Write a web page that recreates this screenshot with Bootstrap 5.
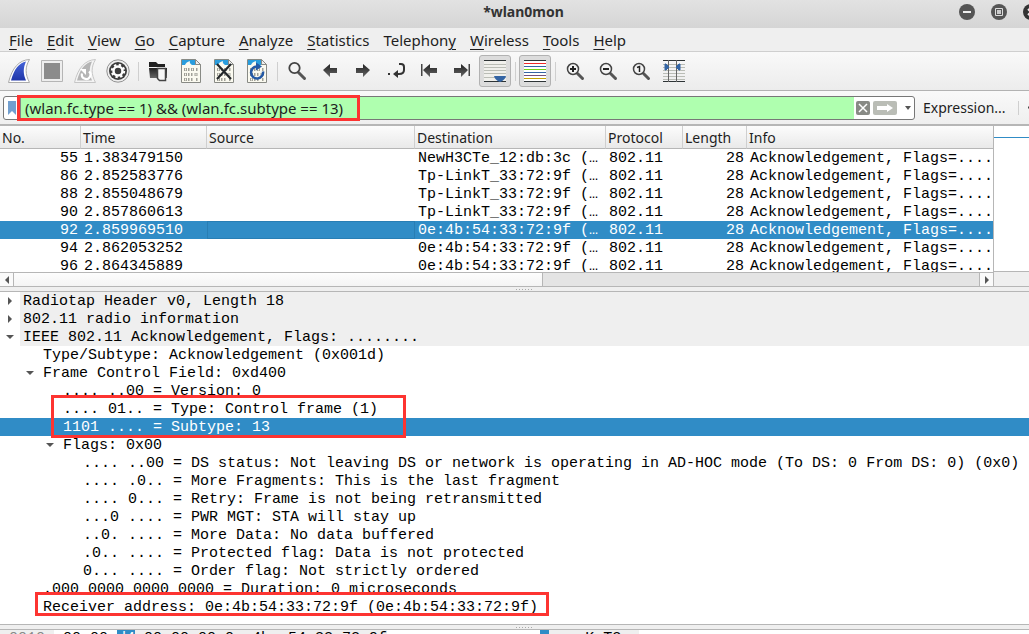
<!DOCTYPE html>
<html lang="en">
<head>
<meta charset="utf-8">
<meta name="viewport" content="width=device-width, initial-scale=1">
<title>*wlan0mon</title>
<link href="https://cdn.jsdelivr.net/npm/bootstrap@5.3.0/dist/css/bootstrap.min.css" rel="stylesheet">
<script src="https://cdn.jsdelivr.net/npm/bootstrap@5.3.0/dist/js/bootstrap.bundle.min.js" defer></script>
<style>
  :root { --ui: "Noto Sans", "Open Sans", sans-serif; --fixed: "Liberation Mono", monospace; --sel: #308cc6; --line: #b6b6b6; --alert: #fd3431; }
  body { font-family: var(--ui); font-size: 14px; line-height: 20px; color: #1e1e1e; background: #efefef; }
  button { font: inherit; color: inherit; background: none; border: 0; padding: 0; }
  .title-bar { height: 28px; background: linear-gradient(#e2e2e2, #d5d5d5); padding-left: 18px; }
  .title-bar h1 { font-size: 14px; line-height: 24px; font-weight: 700; color: #333; }
  .window-buttons { right: -10px; top: 4px; gap: 16px; }
  .window-buttons svg { display: block; }
  .menu-bar { height: 24px; padding-left: 9px; gap: 14px; font-size: 15px; border-bottom: 1px solid #cfcfcf; }
  .menu-bar a { color: #1e1e1e; text-decoration: none; }
  .menu-bar u { text-underline-offset: 3px; text-decoration-thickness: 1px; }
  .tool-bar { height: 39px; padding-left: 3px; background: linear-gradient(#f9f9f9, #ececec); border-bottom: 1px solid #b2b2b2; }
  .tool { width: 32px; height: 32px; margin-right: 1px; display: grid; place-items: center; border-radius: 3px; flex: none; }
  .tool svg { display: block; width: 24px; height: 24px; }
  .tool.pressed { border: 1px solid #b2b2b2; background: #dcdcdc; }
  .tool-gap { width: 1px; height: 19px; margin: 0 3px; background: #cfcfcf; flex: none; }
  .filter-bar { height: 35px; padding-left: 3px; background: linear-gradient(#f9f9f9, #efefef); border-bottom: 2px solid var(--line); }
  .filter-box { width: 912px; height: 24px; border: 1px solid #777; border-radius: 3px; background: #fff; overflow: hidden; flex: none; }
  .filter-box input { border: 0; border-left: 1px solid #888; background: #afffaf; padding: 0 0 0 4px; min-width: 0; height: 22px; outline: 0; color: #1e1e1e; font-size: 15px; margin-right: 2px; }
  .filter-apply { margin-left: 3px; }
  .filter-recent { padding: 0 3px 0 8px; }
  .filter-gap { width: 1px; height: 14px; margin: 0 9px 0 12px; background: #cfcfcf; flex: none; }
  .ring { position: absolute; border: 3px solid var(--alert); pointer-events: none; }
  .ring-filter { left: 17px; top: 4px; width: 343px; height: 26px; }
  .ring-subtype { left: 51px; top: 103px; width: 355px; height: 43px; }
  .ring-receiver { left: 35px; top: 300px; width: 514px; height: 24px; }
  .packet-list { width: 994px; border-right: 1px solid var(--line); background: #fff; flex: none; }
  .packet-view { height: 146px; overflow: hidden; }
  .packets { width: 993px; table-layout: fixed; border-collapse: separate; border-spacing: 0; font: 15px/17px var(--fixed); color: #000; }
  .packets th { font: 14px/20px var(--ui); color: #1e1e1e; height: 23px; padding: 2px 2px 0; background: linear-gradient(#fcfcfc, #e9e9e9); border-right: 1px solid #cfcfcf; border-bottom: 1px solid var(--line); }
  .packets th:last-child { border-right: 0; }
  .packets td { height: 18px; padding: 1px 3px 0; white-space: nowrap; overflow: hidden; text-overflow: ellipsis; }
  .packets td:last-child { text-overflow: clip; padding-right: 0; }
  .packets .num { text-align: right; }
  .packets .chosen td { background: var(--sel); color: #fff; }
  .packets .chosen .current-cell { box-shadow: inset 0 0 0 1px #287eb4; }
  .scroll-row { height: 15px; border-top: 1px solid var(--line); border-bottom: 1px solid var(--line); background: #e4e4e4; }
  .scroll-row button { width: 13px; background: #fafafa; display: grid; place-items: center; }
  .scroll-thumb { width: 530px; border: solid var(--line); border-width: 0 1px; background: linear-gradient(#fdfdfd, #f4f4f4); }
  .scroll-space { border-right: 1px solid var(--line); }
  .side-pane { border-bottom: 1px solid var(--line); }
  .mini-map { height: 146px; background: #fff; border-bottom: 1px solid var(--line); }
  .mini-map hr { margin: 11px 0 0; border: 0; border-top: 1px solid var(--sel); opacity: 1; }
  .splitter { height: 4px; display: grid; place-items: center; padding-left: 20px; }
  .splitter i { width: 17px; height: 1px; background: repeating-linear-gradient(90deg, #a9a9a9 0 1px, transparent 1px 3px); }
  .tree-pane { border: solid var(--line); border-width: 1px 0; background: #fff; font: 15px/17px var(--fixed); color: #000; height: 334px; }
  .tree-pane ul { list-style: none; margin: 0; padding: 0; }
  .tree-row { height: 18px; white-space: pre; display: flex; }
  .tree-row button { width: 20px; display: grid; place-items: center; flex: none; }
  .tree-row span { flex: 1; padding: 1px 0 0 3px; }
  .d1 { padding-left: 20px; } .d2 { padding-left: 40px; } .d3 { padding-left: 60px; } .d4 { padding-left: 80px; }
  .protocol span { background: #efefef; }
  .tree-row.chosen { background: var(--sel); color: #fff; }
  .hex-pane { height: 22px; background: #fff; border-top: 1px solid var(--line); font: 15px/18px var(--fixed); color: #000; white-space: pre; }
  .hex-address { width: 54px; padding-left: 9px; color: #888; background: #efefef; }
  .hex-bytes { background: #efefef; }
  .hex-on { background: var(--sel); color: #fff; }
</style>
</head>
<body>
<div class="vh-100 overflow-hidden">
  <header class="title-bar position-relative text-center">
    <h1 class="m-0">*wlan0mon</h1>
    <div class="window-buttons position-absolute d-flex">
      <button type="button" aria-label="Minimize"><svg width="16" height="16"><circle cx="8" cy="8" r="8" fill="#555"/><path d="M4 8h8" stroke="#eee" stroke-width="2"/></svg></button>
      <button type="button" aria-label="Maximize"><svg width="16" height="16"><circle cx="8" cy="8" r="8" fill="#555"/><path d="M4.500 4.500h7v7h-7z" fill="none" stroke="#ddd"/><path d="M6 6h4v4H6z" fill="#ccc"/></svg></button>
      <button type="button" aria-label="Close"><svg width="16" height="16"><circle cx="8" cy="8" r="8" fill="#333"/><path d="M5 5l6 6M11 5l-6 6" stroke="#eee" stroke-width="2"/></svg></button>
    </div>
  </header>

  <nav class="menu-bar d-flex align-items-center" aria-label="Menu">
    <a href="#"><u>F</u>ile</a><a href="#"><u>E</u>dit</a><a href="#"><u>V</u>iew</a><a href="#"><u>G</u>o</a><a href="#"><u>C</u>apture</a><a href="#"><u>A</u>nalyze</a><a href="#"><u>S</u>tatistics</a><a href="#">Telephon<u>y</u></a><a href="#"><u>W</u>ireless</a><a href="#"><u>T</u>ools</a><a href="#"><u>H</u>elp</a>
  </nav>

  <svg class="position-absolute" width="0" height="0" aria-hidden="true">
    <defs>
      <linearGradient id="finBlue" x2="0" y2="1"><stop stop-color="#4564d8"/><stop offset="1" stop-color="#1f35a8"/></linearGradient>
      <linearGradient id="arrowGray" x2="0" y2="1"><stop stop-color="#222"/><stop offset="1" stop-color="#666"/></linearGradient>
    </defs>
    <symbol id="file" viewBox="0 0 24 24">
      <path d="M2.500.5h14l5 5v18h-19z" fill="#fbfaf0" stroke="#888a85"/>
      <path d="M3 1h13v4h5v1H13q-3-2-2-4-4 1-5 4H3z" fill="#2a9ddd"/><path d="M16.500.5v5h5z" fill="#eee" stroke="#888a85"/>
      <path d="M5 10.500h3M9 10.500h1.500M12 10.500h3M17 10.500h1.500M5 15.500h3M9 15.500h1.500M12 15.500h1.500M15.500 15.500h3M5 20.500h3M9 20.500h1.500M12 20.500h1.500M17 20.500h1.500" stroke="#8a8a82" stroke-opacity=".8" stroke-width="3"/>
      <path d="M6.500 9.500v2M13.500 9.500v2M6.500 14.500v2M17 14.500v2M6.500 19.500v2" stroke="#fbfaf0"/>
    </symbol>
    <symbol id="lens" viewBox="0 0 24 24">
      <path d="M14.500 14.500l5 5" stroke="#555" stroke-width="3" stroke-linecap="round"/><circle cx="10" cy="10" r="5.500" fill="#f4f4f4" stroke="#444" stroke-width="1.500"/>
    </symbol>
    <symbol id="shut" viewBox="0 0 8 8"><path d="M2 0v8l4-4z" fill="#555"/></symbol>
    <symbol id="open" viewBox="0 0 8 8"><path d="M0 2h8L4 6z" fill="#555"/></symbol>
  </svg>

  <div class="tool-bar d-flex align-items-center" role="toolbar" aria-label="Main">
    <button class="tool" type="button" aria-label="Start capture"><svg viewBox="0 0 24 24"><path d="M1.500 23.500C5 9 12 1 22.500.5 18 8 18 15 22.500 23.500z" fill="#fff" stroke="#aaa"/><path d="M4 21.500C7 10 12 4 19 2.500 16 9 16 15 19 21.500z" fill="url(#finBlue)"/></svg></button>
    <button class="tool" type="button" aria-label="Stop capture"><svg viewBox="0 0 24 24"><path d="M1.500 1.500h21v21h-21z" fill="#eee" stroke="#b5b5b5"/><path d="M4 4h16v16H4z" fill="#8b8b8b"/></svg></button>
    <button class="tool" type="button" aria-label="Restart capture"><svg viewBox="0 0 24 24"><path d="M1.500 23.500C5 9 12 1 22.500.5 18 8 18 15 22.500 23.500z" fill="#f4f4f4" stroke="#c6c6c6"/><path d="M4 21.500C7 10 12 4 19 2.500 16 9 16 15 19 21.500z" fill="#b5b5b5"/><path d="M16 12.500a4.300 4.300 0 1 1-7 2" fill="none" stroke="#fff" stroke-width="2.200"/><path d="M7 10h6v6z" fill="#fff"/></svg></button>
    <button class="tool" type="button" aria-label="Capture options"><svg viewBox="0 0 24 24"><circle cx="12" cy="12" r="11.200" fill="#eee" stroke="#929292"/><circle cx="12" cy="12" r="9" fill="#3c3c3c"/><circle cx="12" cy="12" r="4.500" fill="none" stroke="#fff" stroke-width="2.500"/><circle cx="12" cy="12" r="6.200" fill="none" stroke="#fff" stroke-width="2" stroke-dasharray="2.400 2.470"/></svg></button>
    <span class="tool-gap"></span>
    <button class="tool" type="button" aria-label="Open"><svg viewBox="0 0 24 24"><path d="M3 3h7l2 2h7v3H3z" fill="#222"/><path d="M3 9h18v10H4z" fill="url(#arrowGray)"/><path d="M11.500 9.500h8v12h-6l-2-2z" fill="#f7f7f7" stroke="#444" stroke-width="1.500"/></svg></button>
    <button class="tool" type="button" aria-label="Save"><svg><use href="#file"/></svg></button>
    <button class="tool" type="button" aria-label="Close file"><svg viewBox="0 0 24 24"><use href="#file"/><path d="M5 5l14 15M19 5L5 20" stroke="#25292c" stroke-width="2.200"/></svg></button>
    <button class="tool" type="button" aria-label="Reload"><svg viewBox="0 0 24 24"><use href="#file"/><path d="M18 12.500A6 6 0 1 1 12 7.500" fill="none" stroke="#2459a5" stroke-width="2.500"/><path d="M11 3.500l6 4-6 4z" fill="#2459a5"/></svg></button>
    <span class="tool-gap"></span>
    <button class="tool" type="button" aria-label="Find"><svg viewBox="0 0 24 24"><path d="M13.500 13.500l6 6" stroke="#555" stroke-width="3" stroke-linecap="round"/><circle cx="9.500" cy="9" r="5.200" fill="#f4f4f4" stroke="#444" stroke-width="1.800"/></svg></button>
    <button class="tool" type="button" aria-label="Previous"><svg viewBox="0 0 24 24"><path d="M5 11l7-6v4h7v5h-7v4z" fill="url(#arrowGray)"/></svg></button>
    <button class="tool" type="button" aria-label="Next"><svg viewBox="0 0 24 24"><path d="M19 11l-7-6v4H5v5h7v4z" fill="url(#arrowGray)"/></svg></button>
    <button class="tool" type="button" aria-label="Go to packet"><svg viewBox="0 0 24 24"><path d="M15 5h2q3 0 3 3v3q0 4-5 4h-3" fill="none" stroke="#333" stroke-width="2"/><path d="M9 15l5-4v8z" fill="#333"/><path d="M4 14h2v2H4z" fill="#333"/></svg></button>
    <button class="tool" type="button" aria-label="First packet"><svg viewBox="0 0 24 24"><path d="M4 5h1.500v12H4z" fill="#444"/><path d="M6 11l7-6v4h7v5h-7v4z" fill="url(#arrowGray)"/></svg></button>
    <button class="tool" type="button" aria-label="Last packet"><svg viewBox="0 0 24 24"><path d="M18.500 5H20v12h-1.500z" fill="#444"/><path d="M18 11l-7-6v4H4v5h7v4z" fill="url(#arrowGray)"/></svg></button>
    <button class="tool pressed" type="button" aria-label="Auto scroll"><svg viewBox="0 0 24 24"><path d="M1 1h22v22H1z" fill="#f0f0ec"/><path d="M1 1.500h22M1 22.500h22" stroke="#2e3436"/><path d="M1 5.500h22M1 8.500h22M1 11.500h22M1 14.500h22M1 18.500h22" stroke="#babdb6"/><path d="M11 17h12q-1 4-6 6-5-2-6-6z" fill="#3465a4"/></svg></button>
    <span class="tool-gap"></span>
    <button class="tool pressed" type="button" aria-label="Colorize"><svg viewBox="0 0 24 24"><path d="M1 1h22v22H1z" fill="#fff"/><path d="M1 1.500h22M1 22.500h22" stroke="#2e3436"/><path d="M1 4.500h22" stroke="#ef2929"/><path d="M1 7.500h22M1 13.500h22" stroke="#3465a4"/><path d="M1 10.500h22" stroke="#73d216"/><path d="M1 16.500h22" stroke="#75507b"/><path d="M1 19.500h22" stroke="#c4a000"/></svg></button>
    <span class="tool-gap"></span>
    <button class="tool" type="button" aria-label="Zoom in"><svg viewBox="0 0 24 24"><use href="#lens"/><path d="M7 10h6M10 7v6" stroke="#222" stroke-width="2"/></svg></button>
    <button class="tool" type="button" aria-label="Zoom out"><svg viewBox="0 0 24 24"><use href="#lens"/><path d="M7 10h6" stroke="#222" stroke-width="2"/></svg></button>
    <button class="tool" type="button" aria-label="Normal size"><svg viewBox="0 0 24 24"><use href="#lens"/><path d="M8 8.500l2.500-1V13" fill="none" stroke="#222" stroke-width="1.500"/></svg></button>
    <button class="tool" type="button" aria-label="Resize columns"><svg viewBox="0 0 24 24"><path d="M1 1.500h22M1 22.500h22" stroke="#2e3436"/><path d="M1 5.500h22M1 8.500h22M1 11.500h22M1 14.500h22M1 17.500h22M1 20.500h22" stroke="#babdb6"/><path d="M6.500 1v22M14.500 1v22" stroke="#666"/><path d="M3 5h1l3 3-3 3H3zM18 5h-1l-3 3 3 3h1z" fill="#3465a4" stroke="#3465a4"/></svg></button>
  </div>

  <div class="filter-bar d-flex align-items-center position-relative">
    <div class="filter-box d-flex align-items-center">
      <button type="button" class="px-1" aria-label="Bookmarks"><svg class="d-block" width="8" height="14"><path d="M0 0h8v14l-4-4-4 4z" fill="#729fcf"/></svg></button>
      <input class="flex-fill" type="text" aria-label="Display filter" value="(wlan.fc.type == 1) &amp;&amp; (wlan.fc.subtype == 13)">
      <button type="button" aria-label="Clear"><svg class="d-block" width="14" height="14"><rect width="14" height="14" rx="2" fill="#888a85"/><path d="M3 3l8 8M11 3l-8 8" stroke="#fff" stroke-width="1.500"/></svg></button>
      <button type="button" class="filter-apply" aria-label="Apply"><svg class="d-block" width="24" height="14"><rect width="24" height="14" rx="2" fill="#babdb6"/><path d="M4 5h10V3l6 4-6 4V9H4z" fill="#fff"/></svg></button>
      <button type="button" class="filter-recent" aria-label="Recent filters"><svg class="d-block" width="6" height="4"><path d="M0 0h6L3 4z" fill="#555"/></svg></button>
    </div>
    <button type="button" class="ms-2 flex-shrink-0">Expression...</button>
    <span class="filter-gap"></span>
    <button type="button" class="flex-fill overflow-hidden" aria-label="Add filter button"><svg class="d-block" width="9" height="9"><path d="M0 4.500h9M4.500 0v9" stroke="#444" stroke-width="2"/></svg></button>
    <span class="ring ring-filter"></span>
  </div>

  <div class="d-flex">
    <div class="packet-list">
      <div class="packet-view">
        <table class="packets">
          <colgroup><col style="width:81px"><col style="width:126px"><col style="width:208px"><col style="width:191px"><col style="width:77px"><col style="width:64px"><col></colgroup>
          <thead><tr><th>No.</th><th>Time</th><th>Source</th><th>Destination</th><th>Protocol</th><th>Length</th><th>Info</th></tr></thead>
          <tbody>
            <tr><td class="num">55</td><td>1.383479150</td><td></td><td>NewH3CTe_12:db:3c (…</td><td>802.11</td><td class="num">28</td><td>Acknowledgement, Flags=....</td></tr>
            <tr><td class="num">86</td><td>2.852583776</td><td></td><td>Tp-LinkT_33:72:9f (…</td><td>802.11</td><td class="num">28</td><td>Acknowledgement, Flags=....</td></tr>
            <tr><td class="num">88</td><td>2.855048679</td><td></td><td>Tp-LinkT_33:72:9f (…</td><td>802.11</td><td class="num">28</td><td>Acknowledgement, Flags=....</td></tr>
            <tr><td class="num">90</td><td>2.857860613</td><td></td><td>Tp-LinkT_33:72:9f (…</td><td>802.11</td><td class="num">28</td><td>Acknowledgement, Flags=....</td></tr>
            <tr class="chosen"><td class="num">92</td><td>2.859969510</td><td class="current-cell"></td><td>0e:4b:54:33:72:9f (…</td><td>802.11</td><td class="num">28</td><td>Acknowledgement, Flags=....</td></tr>
            <tr><td class="num">94</td><td>2.862053252</td><td></td><td>0e:4b:54:33:72:9f (…</td><td>802.11</td><td class="num">28</td><td>Acknowledgement, Flags=....</td></tr>
            <tr><td class="num">96</td><td>2.864345889</td><td></td><td>0e:4b:54:33:72:9f (…</td><td>802.11</td><td class="num">28</td><td>Acknowledgement, Flags=....</td></tr>
          </tbody>
        </table>
      </div>
      <div class="scroll-row d-flex">
        <button type="button" aria-label="Scroll left"><svg width="4" height="8"><path d="M4 0v8L0 4z" fill="#555"/></svg></button>
        <div class="scroll-thumb"></div>
        <div class="scroll-space flex-fill"></div>
        <button type="button" aria-label="Scroll right"><svg width="4" height="8"><path d="M0 0v8l4-4z" fill="#555"/></svg></button>
      </div>
    </div>
    <div class="side-pane flex-fill"><div class="mini-map overflow-hidden"><hr></div></div>
  </div>
  <div class="splitter"><i></i></div>

  <div class="tree-pane position-relative">
    <ul>
      <li class="tree-row protocol"><button type="button" aria-label="Expand"><svg width="8" height="8"><use href="#shut"/></svg></button><span>Radiotap Header v0, Length 18</span></li>
      <li class="tree-row protocol"><button type="button" aria-label="Expand"><svg width="8" height="8"><use href="#shut"/></svg></button><span>802.11 radio information</span></li>
      <li class="tree-row protocol"><button type="button" aria-label="Collapse"><svg width="8" height="8"><use href="#open"/></svg></button><span>IEEE 802.11 Acknowledgement, Flags: ........</span></li>
      <li class="tree-row d2"><span>Type/Subtype: Acknowledgement (0x001d)</span></li>
      <li class="tree-row d1"><button type="button" aria-label="Collapse"><svg width="8" height="8"><use href="#open"/></svg></button><span>Frame Control Field: 0xd400</span></li>
      <li class="tree-row d3"><span>.... ..00 = Version: 0</span></li>
      <li class="tree-row d3"><span>.... 01.. = Type: Control frame (1)</span></li>
      <li class="tree-row d3 chosen"><span>1101 .... = Subtype: 13</span></li>
      <li class="tree-row d2"><button type="button" aria-label="Collapse"><svg width="8" height="8"><use href="#open"/></svg></button><span>Flags: 0x00</span></li>
      <li class="tree-row d4"><span>.... ..00 = DS status: Not leaving DS or network is operating in AD-HOC mode (To DS: 0 From DS: 0) (0x0)</span></li>
      <li class="tree-row d4"><span>.... .0.. = More Fragments: This is the last fragment</span></li>
      <li class="tree-row d4"><span>.... 0... = Retry: Frame is not being retransmitted</span></li>
      <li class="tree-row d4"><span>...0 .... = PWR MGT: STA will stay up</span></li>
      <li class="tree-row d4"><span>..0. .... = More Data: No data buffered</span></li>
      <li class="tree-row d4"><span>.0.. .... = Protected flag: Data is not protected</span></li>
      <li class="tree-row d4"><span>0... .... = Order flag: Not strictly ordered</span></li>
      <li class="tree-row d2"><span>.000 0000 0000 0000 = Duration: 0 microseconds</span></li>
      <li class="tree-row d2"><span>Receiver address: 0e:4b:54:33:72:9f (0e:4b:54:33:72:9f)</span></li>
    </ul>
    <span class="ring ring-subtype"></span>
    <span class="ring ring-receiver"></span>
  </div>
  <div class="splitter"><i></i></div>
  <div class="hex-pane d-flex"><span class="hex-address">0010</span><span> 00 00 </span><span class="hex-on">d4</span><span class="hex-bytes"> 00 00 00 0e 4b  54 33 72 9f</span><span>                 </span><span class="hex-on">·</span><span class="hex-bytes">····K T3r·</span></div>
</div>
</body>
</html>
